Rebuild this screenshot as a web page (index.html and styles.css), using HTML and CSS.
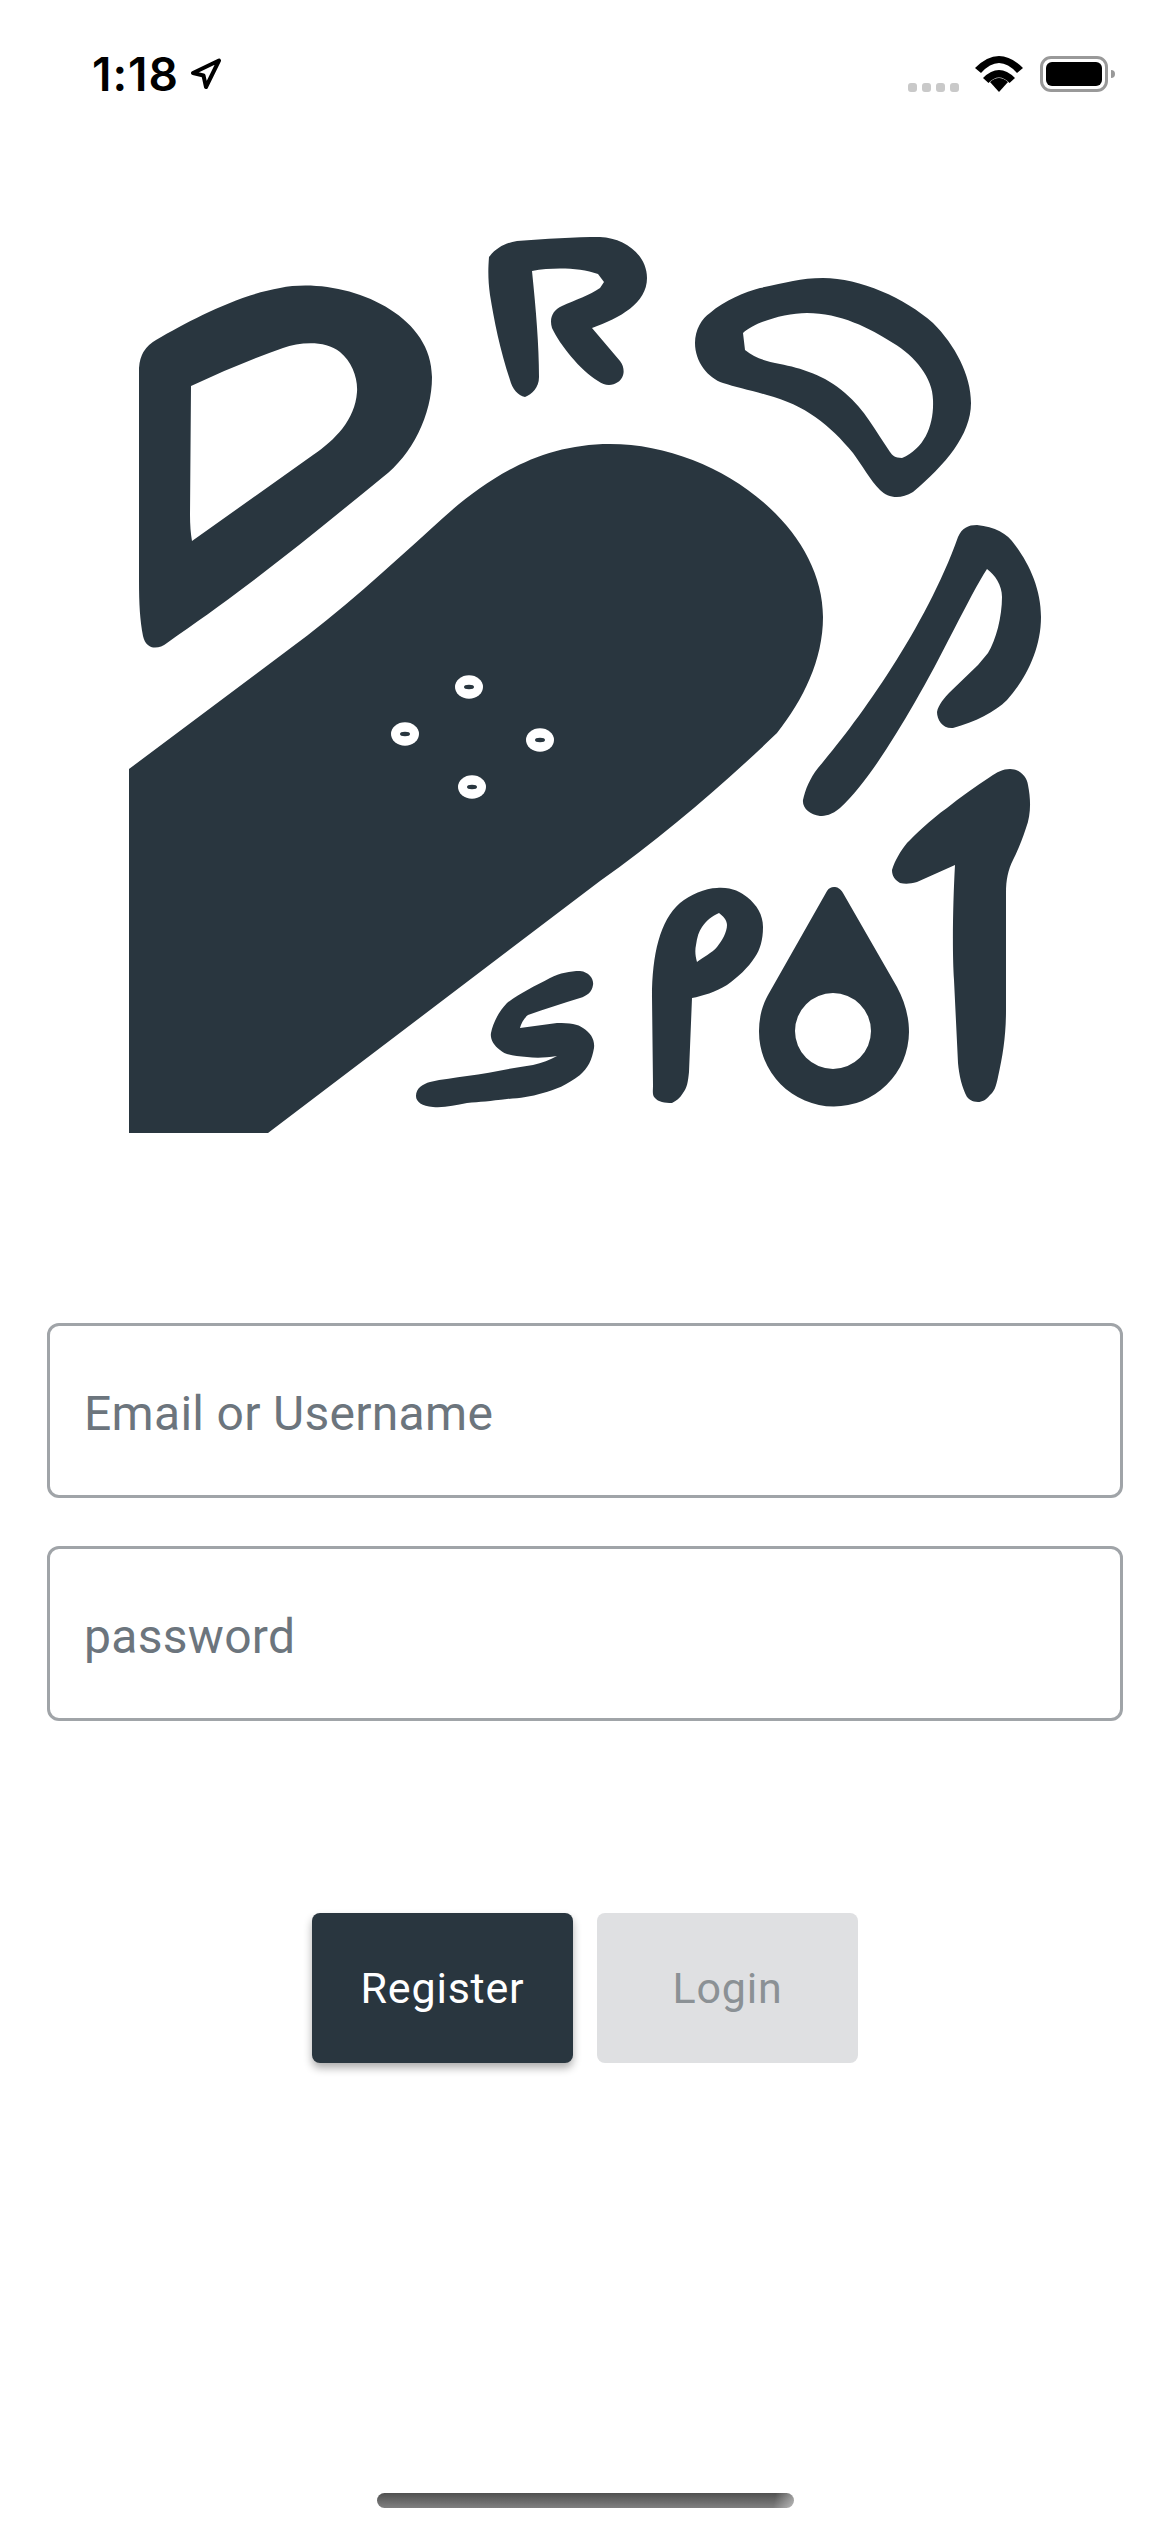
FILE: index.html
```html
<!DOCTYPE html>
<html lang="en">
<head>
<meta charset="utf-8">
<title>Drop Spot</title>
<link rel="stylesheet" href="styles.css">
</head>
<body>
<main class="page">
  <header class="status">
    <div class="status-left">
      <span class="time">1:18</span>
      <svg class="arrow" viewBox="0 0 32 32" width="32" height="32" aria-hidden="true">
        <path d="M3 15 L29 2.500 L16 29 L13.500 17.500 Z" fill="none" stroke="#000" stroke-width="4" stroke-linejoin="round"/>
      </svg>
    </div>
    <div class="status-right">
      <div class="signal"><i></i><i></i><i></i><i></i></div>
      <svg class="wifi" viewBox="975 55 48 36" width="48" height="36" aria-hidden="true">
        <path d="M975 67 Q999 43 1023 67 L1017 72 Q999 52 981 72 Z"/>
        <path d="M983 77 Q999 61 1015 77 L1009.500 82 Q999 71 988.500 82 Z"/>
        <path d="M999 91 L990 81 Q999 73 1008 81 Z"/>
      </svg>
      <div class="battery"><div class="battery-fill"></div></div>
    </div>
  </header>

  <svg class="logo" viewBox="0 130 1170 1100" width="1170" height="1100" role="img" aria-label="Drop Spot logo">
    <g class="ink" fill-rule="evenodd">
      <path d="M139 493 V368 Q140 349 156 340 C190 320 238 295 280 288 C340 276 432 310 432 377 C432 415 412 455 383 477 C340 512 295 549 250 583 C220 606 195 623 167 643 C158 650 146 650 143 636 C140 620 139 605 139 580 Z M191 386 Q235 365 283 348 C300 342 325 340 340 352 C352 362 358 378 357 392 C355 420 335 440 313 455 L192 541 Q190 530 190 515 Z"/>
      <path d="M489 257 C496 248 505 243 517 241 C545 239 575 237 600 237 C625 238 647 255 647 278 C647 303 620 318 592 328 L620 361 C626 369 624 378 618 382 C612 386 605 386 598 381 C580 370 560 345 552 328 C549 318 553 310 562 306 C575 300 590 295 600 288 L604 282 L598 274 C580 268 555 267 532 271 C536 310 539 345 539 377 C539 388 532 394 525 397 C518 396 512 388 510 380 C500 350 494 320 490 295 C488 280 488 270 489 257 Z"/>
      <path d="M695 343 C695 330 702 318 710 313 C725 300 745 292 760 288 C785 283 800 278 823 278 C860 278 905 298 933 323 C955 345 971 375 971 403 C971 435 945 465 913 492 C900 500 888 498 880 490 C870 480 862 465 853 453 C830 425 805 405 767 395 C750 390 735 387 723 383 C708 378 695 362 695 343 Z M743 333 C755 322 785 313 807 313 C840 313 870 328 893 343 C915 356 933 378 933 400 C934 425 925 448 902 458 C895 458 892 455 890 452 C875 430 865 410 845 393 C825 375 800 368 780 364 C765 361 755 358 745 350 Z"/>
      <path d="M958 537 C962 528 968 525 977 525 C995 527 1007 533 1015 545 C1030 565 1041 590 1041 617 C1041 650 1025 680 1007 700 C995 712 975 722 953 728 C943 729 937 720 937 712 C938 705 945 697 950 692 L978 665 L988 653 C996 640 1002 617 1002 597 C1002 585 995 575 987 569 C970 595 940 660 915 702 C890 745 865 785 840 808 C832 815 825 816 820 816 C810 815 802 808 803 800 C805 790 810 778 818 768 C855 725 925 630 958 537 Z"/>
      <path d="M129 769 V1133 H268 L600 881 C665 835 725 783 777 733 C803 700 823 660 823 617 C823 525 715 444 610 444 C535 444 480 483 433 527 C390 566 340 612 288 650 Z"/>
      <path d="M580 971 C590 972 594 980 593 985 C592 992 587 996 580 998 C563 1003 545 1009 528 1015 C524 1018 521 1024 520 1028 L557 1023 C570 1023 578 1024 583 1028 C591 1033 595 1040 594 1048 C592 1060 588 1068 580 1075 C567 1085 555 1090 543 1093 C530 1097 520 1098 507 1099 C490 1101 480 1102 467 1103 C455 1105 445 1108 433 1107 C422 1106 416 1102 416 1096 C416 1088 423 1084 430 1082 C442 1079 455 1078 467 1076 C490 1073 510 1068 533 1065 C542 1063 550 1060 557 1056 C545 1058 535 1058 527 1057 C515 1056 505 1055 500 1050 C493 1045 490 1038 491 1033 C493 1022 500 1010 507 1003 C520 993 535 986 550 978 C560 973 570 971 580 971 Z"/>
      <path d="M652 997 C652 955 660 920 680 903 C690 895 705 888 717 888 C732 887 740 892 747 897 C757 905 763 915 763 927 C763 940 760 950 755 957 C748 968 738 977 727 985 C715 992 703 996 692 998 L689 1072 C688 1082 687 1088 683 1093 C680 1098 676 1101 672 1103 C665 1103 658 1102 655 1098 C652 1095 653 1092 653 1085 Z M719 913 C723 916 727 920 727 925 C727 932 722 941 717 947 C712 953 703 957 697 962 C695 955 695 950 696 945 C697 937 699 931 702 927 C707 920 712 916 719 913 Z"/>
      <path d="M827 891 L768 995 C762 1006 759 1018 759 1031 A75 75 0 0 0 909 1032 C909 1015 904 1000 897 987 L843 893 C840 888 837 887 834 887 C831 887 829 888 827 891 Z M871 1031 A38 38 0 1 0 795 1031 A38 38 0 1 0 871 1031 Z"/>
      <path d="M1010 769 C1020 769 1027 777 1028 785 C1031 800 1031 815 1026 828 C1022 840 1018 850 1013 860 C1008 870 1006 880 1006 893 L1006 1010 C1006 1035 1003 1055 998 1077 C996 1087 994 1092 990 1095 C986 1100 982 1102 978 1102 C972 1102 969 1099 967 1097 C962 1088 959 1075 958 1063 L954 980 C952 950 953 900 955 865 L917 882 C910 884 905 884 900 883 C895 880 892 876 892 870 C895 860 900 852 907 843 C915 835 930 820 947 808 C960 797 975 787 990 777 C997 772 1003 769 1010 769 Z"/>
    </g>
    <g class="bolt">
      <ellipse cx="469" cy="687" rx="14" ry="11.700"/>
      <ellipse cx="405" cy="734" rx="14" ry="11.700"/>
      <ellipse cx="540" cy="740" rx="14" ry="11.700"/>
      <ellipse cx="472" cy="787" rx="14" ry="11.700"/>
    </g>
    <g class="ink">
      <ellipse cx="469" cy="687" rx="5" ry="2.200"/>
      <ellipse cx="405" cy="734" rx="5" ry="2.200"/>
      <ellipse cx="540" cy="740" rx="5" ry="2.200"/>
      <ellipse cx="472" cy="787" rx="5" ry="2.200"/>
    </g>
  </svg>

  <form class="form">
    <input class="field" type="text" placeholder="Email or Username">
    <input class="field" type="password" placeholder="password">
  </form>

  <div class="actions">
    <button class="btn btn-primary" type="button">Register</button>
    <button class="btn btn-disabled" type="button" disabled>Login</button>
  </div>

  <div class="home-bar"></div>
</main>
</body>
</html>
```
FILE: styles.css
```css
* { box-sizing: border-box; }

html, body {
  margin: 0;
  padding: 0;
  background: #fff;
}

.page {
  width: 1170px;
  height: 2532px;
  display: flex;
  flex-direction: column;
  overflow: hidden;
  font-family: Roboto, "Liberation Sans", sans-serif;
}

.status {
  flex: none;
  height: 130px;
  padding: 55px 62px 0 92px;
  display: flex;
  justify-content: space-between;
  align-items: flex-start;
}

.status-left {
  display: flex;
  align-items: center;
  gap: 11px;
  height: 38px;
}

.time {
  font-family: Inter, sans-serif;
  font-weight: 600;
  font-size: 46px;
  line-height: 38px;
  color: #000;
  letter-spacing: 1px;
}

.arrow { flex: none; }

.status-right {
  display: flex;
  align-items: flex-end;
  height: 37px;
}

.signal {
  display: flex;
  gap: 5px;
  margin-right: 16px;
}

.signal i {
  display: block;
  width: 9px;
  height: 9px;
  border-radius: 3px;
  background: #c9c9c9;
}

.wifi {
  display: block;
  fill: #000;
  margin-right: 17px;
}

.battery {
  position: relative;
  width: 68px;
  height: 36px;
  padding: 3px;
  border: 3px solid #999;
  border-radius: 11px;
}

.battery::after {
  content: "";
  position: absolute;
  right: -10px;
  top: 11px;
  width: 4px;
  height: 8px;
  border-radius: 0 4px 4px 0;
  background: #999;
}

.battery-fill {
  height: 100%;
  border-radius: 6px;
  background: #000;
}

.logo {
  display: block;
  flex: none;
}

.ink { fill: #29363f; }
.bolt { fill: #fff; }

.form {
  margin-top: 93px;
  padding: 0 47px;
  display: flex;
  flex-direction: column;
  gap: 48px;
}

.field {
  display: block;
  width: 100%;
  height: 175px;
  padding: 6px 36px 0 34px;
  border: 3px solid #a0a4a8;
  border-radius: 12px;
  background: #fff;
  font-family: Roboto, sans-serif;
  font-size: 48px;
  letter-spacing: 0.3px;
  color: #495057;
  outline: none;
}

.field::placeholder {
  color: #6c757d;
  opacity: 1;
}

.actions {
  margin-top: 192px;
  display: flex;
  justify-content: center;
  gap: 24px;
}

.btn {
  width: 261px;
  height: 150px;
  border: 0;
  border-radius: 8px;
  font-family: Roboto, sans-serif;
  font-size: 43px;
  font-weight: 400;
  letter-spacing: 0.8px;
}

.btn-primary {
  background: #29363f;
  color: #fff;
  box-shadow: 0 5px 9px rgba(0, 0, 0, 0.32);
}

.btn-disabled {
  background: #dfe0e2;
  color: #8b9195;
}

.home-bar {
  flex: none;
  width: 417px;
  height: 15px;
  margin: auto auto 24px;
  border-radius: 8px;
  background:
    linear-gradient(100deg, rgba(255, 255, 255, 0) 95%, rgba(255, 255, 255, 0.45) 100%),
    linear-gradient(180deg, #505050 0%, #808080 100%);
}
```
